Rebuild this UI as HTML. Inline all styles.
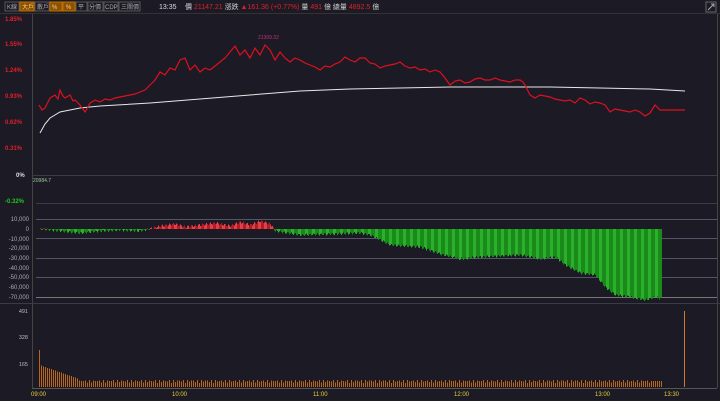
<!DOCTYPE html><html><head><meta charset="utf-8"><style>
body{margin:0;background:#1b1a25;width:720px;height:401px;overflow:hidden;font-family:"Liberation Sans","Noto Sans CJK TC",sans-serif}
svg{display:block}
</style></head><body>
<svg id="s" width="720" height="401" xmlns="http://www.w3.org/2000/svg" font-family="Liberation Sans, Noto Sans CJK TC, sans-serif">
<rect width="720" height="401" fill="#1b1a25"/>
<g font-size="6">
<rect x="5" y="2" width="14" height="9" fill="none" stroke="#555"/><text x="7" y="9" fill="#aaa">K線</text>
<rect x="20" y="2" width="14" height="9" fill="#8a5200" stroke="#c07000"/><text x="22" y="9" fill="#ffcc88">大戶</text>
<rect x="35" y="2" width="14" height="9" fill="none" stroke="#555"/><text x="37" y="9" fill="#aaa">散戶</text>
<rect x="50" y="2" width="12" height="9" fill="#8a5200" stroke="#c07000"/><text x="52" y="9" fill="#ffcc88">%</text>
<rect x="63" y="2" width="12" height="9" fill="#8a5200" stroke="#c07000"/><text x="66" y="9" fill="#ffcc88">%</text>
<rect x="76" y="2" width="11" height="9" fill="none" stroke="#555"/><text x="78" y="9" fill="#aaa">平</text>
<rect x="88" y="2" width="15" height="9" fill="none" stroke="#555"/><text x="89" y="9" fill="#aaa">分價</text>
<rect x="104" y="2" width="14" height="9" fill="none" stroke="#555"/><text x="105" y="9" fill="#aaa">CDP</text>
<rect x="119" y="2" width="21" height="9" fill="none" stroke="#555"/><text x="121" y="9" fill="#aaa">三關價</text>
<text x="159" y="9" fill="#ddd" font-size="7">13:35</text>
<text x="185" y="9" fill="#ccc" font-size="7">價 <tspan fill="#e0202a">21147.21</tspan>  漲跌 <tspan fill="#e0202a">▲161.36 (+0.77%)</tspan>  量 <tspan fill="#e0202a">491</tspan> 億  總量 <tspan fill="#e0202a">4892.5</tspan> 億</text>
<rect x="706" y="2" width="10" height="10" fill="none" stroke="#666"/><path d="M708 10l6-6M711 4h3v3" stroke="#aaa" fill="none"/>
</g>
<line x1="0" y1="13.5" x2="720" y2="13.5" stroke="#333"/>
<line x1="32.5" y1="14" x2="32.5" y2="388" stroke="#444"/>
<line x1="717.5" y1="14" x2="717.5" y2="388" stroke="#444"/>
<g font-size="6" fill="#e0202a" font-weight="bold">
<text x="5" y="21">1.85%</text><text x="5" y="46">1.55%</text><text x="5" y="72">1.24%</text><text x="5" y="98">0.93%</text><text x="5" y="124">0.62%</text><text x="5" y="150">0.31%</text>
<text x="16" y="177" fill="#ddd">0%</text><text x="5" y="203" fill="#1ec81e">-0.32%</text>
</g>
<line x1="32" y1="175.5" x2="717" y2="175.5" stroke="#3a3a48"/>
<line x1="36" y1="203.5" x2="717" y2="203.5" stroke="#3a3a48"/>
<text x="33" y="182" font-size="5" fill="#9c9">20984.7</text>
<text x="258" y="39" font-size="5" fill="#c03080">21309.32</text>
<polyline fill="none" stroke="#e8e8e8" stroke-width="1" points="40,133 45,124 50,118 60,112 80,108 100,106 150,103 200,99 250,95 300,91 350,89 400,88 450,87 500,87 550,87 600,88 650,89 685,91"/>
<polyline fill="none" stroke="#e0101e" stroke-width="1.2" points="39,105 42,110 45,108 50,98 55,95 58,99 60,90 63,96 65,98 70,95 73,101 75,100 80,105 85,112 88,107 90,103 95,100 100,102 105,99 110,100 115,98 120,97 125,96 130,95 135,94 140,92 145,90 150,85 155,80 160,72 165,75 170,68 175,70 180,60 185,58 190,70 195,65 200,72 205,68 210,70 215,66 220,62 225,58 230,52 235,46 240,55 245,50 250,58 255,48 260,55 265,45 270,50 275,60 280,52 285,58 290,62 295,58 300,60 305,63 310,65 315,67 320,70 325,66 330,67 335,64 340,62 345,57 350,60 355,62 360,58 365,58 370,63 375,64 380,68 385,66 390,65 395,64 400,62 405,66 410,68 415,67 420,70 425,69 430,72 435,70 440,72 445,78 450,85 455,81 460,80 465,83 470,82 475,79 480,78 485,80 490,80 495,78 500,80 505,81 510,82 515,80 520,80 523,82 525,85 530,95 535,98 540,95 545,96 550,97 555,99 560,100 565,101 570,100 575,103 580,98 585,100 590,104 595,102 600,103 605,105 610,112 615,109 620,110 625,111 630,112 635,110 640,112 645,116 650,113 655,105 660,110 665,110 675,110 685,110"/>
<g font-size="6" fill="#aaa" text-anchor="end">
<text x="29" y="221">10,000</text><text x="29" y="231">0</text><text x="29" y="241">-10,000</text><text x="29" y="250">-20,000</text><text x="29" y="260">-30,000</text><text x="29" y="270">-40,000</text><text x="29" y="279">-50,000</text><text x="29" y="289">-60,000</text><text x="29" y="299">-70,000</text>
</g>
<g stroke="#55556a" stroke-width="1">
<line x1="36" y1="219.5" x2="717" y2="219.5"/><line x1="36" y1="238.5" x2="717" y2="238.5"/><line x1="36" y1="258.5" x2="717" y2="258.5"/><line x1="36" y1="277.5" x2="717" y2="277.5"/><line x1="36" y1="297.5" x2="717" y2="297.5" stroke="#777"/>
</g>
<g id="flow" shape-rendering="crispEdges"></g>
<line x1="0" y1="303.5" x2="720" y2="303.5" stroke="#3a3a48"/>
<g font-size="5.5" fill="#bbb" text-anchor="end"><text x="28" y="313">491</text><text x="28" y="339">328</text><text x="28" y="366">165</text></g>
<g id="vol" shape-rendering="crispEdges"></g>
<line x1="32" y1="388.5" x2="717" y2="388.5" stroke="#555"/>
<g font-size="6" fill="#e8d23a"><text x="31" y="396">09:00</text><text x="172" y="396">10:00</text><text x="313" y="396">11:00</text><text x="454" y="396">12:00</text><text x="595" y="396">13:00</text><text x="664" y="396">13:30</text></g>
</svg>
<script>
var NS="http://www.w3.org/2000/svg";
function r(g,x,y,w,h,c){var e=document.createElementNS(NS,"rect");e.setAttribute("x",x);e.setAttribute("y",y);e.setAttribute("width",w);e.setAttribute("height",h);e.setAttribute("fill",c);g.appendChild(e);}
var f=document.getElementById("flow");
var pts=[[40,0],[60,2],[80,4],[100,2],[120,1],[140,2],[160,-3],[175,-5],[185,-2],[200,-4],[215,-6],[230,-3],[240,-7],[250,-4],[260,-8],[270,-5],[275,2],[300,6],[330,5],[360,4],[370,6],[390,16],[420,18],[440,25],[460,30],[480,28],[500,27],[520,26],[540,30],[555,28],[565,36],[580,44],[595,46],[605,58],[615,66],[630,68],[645,71],[655,68],[662,70]];
function dep(x){for(var i=1;i<pts.length;i++){if(x<=pts[i][0]){var a=pts[i-1],b=pts[i];return a[1]+(b[1]-a[1])*(x-a[0])/(b[0]-a[0]);}}return 0;}
for(var x=40;x<662;x++){var d=dep(x)+Math.sin(x*1.7)*1.2;if(d>=0){r(f,x,229,1,Math.max(d,0.5),(x%7<4)?"#1a8a1a":"#2ab02a");}else{r(f,x,229+d,1,-d,(x%6<3)?"#e04048":"#b81a24");}}
var v=document.getElementById("vol");
for(var x=39;x<662;x+=2){var h;var t=x-39;h=t<1?37:(t<40?22-t*0.35:4+Math.abs(Math.sin(x*0.9))*3);if(x>650)h=6;r(v,x,387-h,1,h,"#b8661c");}
r(v,684,311,1,76,"#d07a28");
</script>
</body></html>
